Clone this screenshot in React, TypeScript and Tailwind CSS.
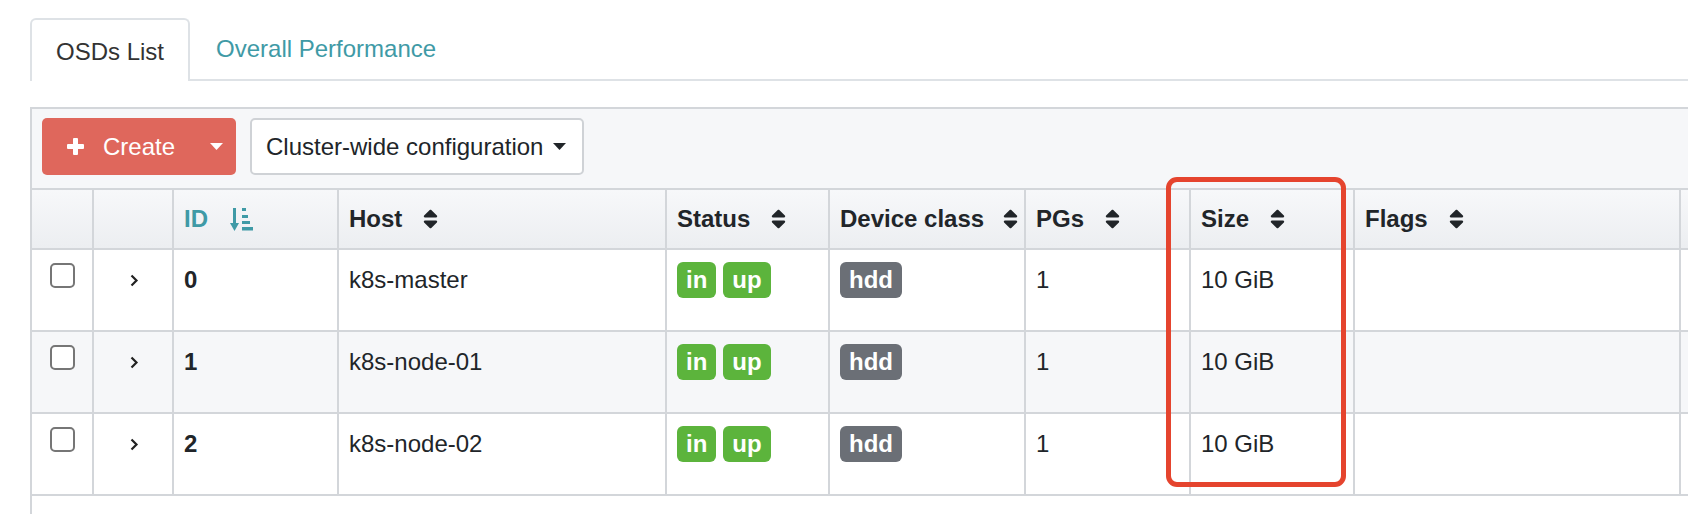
import React from 'react';

type Osd = { id: number; host: string; pgs: number; size: string };

const osds: Osd[] = [
  { id: 0, host: 'k8s-master', pgs: 1, size: '10 GiB' },
  { id: 1, host: 'k8s-node-01', pgs: 1, size: '10 GiB' },
  { id: 2, host: 'k8s-node-02', pgs: 1, size: '10 GiB' },
];

const SortIcon = () => (
  <svg width="15" height="24" viewBox="0 0 320 512" className="shrink-0 fill-[#212529]">
    <path d="M41 288h238c21.4 0 32.1 25.9 17 41L177 448c-9.4 9.4-24.6 9.4-33.9 0L24 329c-15.1-15.1-4.4-41 17-41zm255-105L177 64c-9.4-9.4-24.6-9.4-33.9 0L24 183c-15.1 15.1-4.4 41 17 41h238c21.4 0 32.1-25.9 17-41z" />
  </svg>
);

const SortAscIcon = () => (
  <svg width="24" height="25" viewBox="0 0 24 25" className="shrink-0 fill-[#3f9aa6]">
    <rect x="3" y="1" width="3" height="18" />
    <path d="M0 16h9l-4.5 8z" />
    <rect x="12" y="1" width="4" height="3" />
    <rect x="12" y="8" width="6" height="3" />
    <rect x="12" y="14" width="8" height="3" />
    <rect x="12" y="20" width="11" height="3.5" />
  </svg>
);

const Caret = ({ color }: { color: string }) => (
  <svg width="13" height="7" viewBox="0 0 13 7" className="shrink-0">
    <path d="M0 0h13L6.5 7z" fill={color} />
  </svg>
);

const cols = [
  'w-[60px]',
  'w-[80px]',
  'w-[165px]',
  'w-[328px]',
  'w-[163px]',
  'w-[196px]',
  'w-[165px]',
  'w-[164px]',
  'w-[326px]',
  'w-[220px]',
];

function HeadCell({ i, children }: { i: number; children?: React.ReactNode }) {
  return (
    <div className={`${cols[i]} shrink-0 h-full flex items-center pl-[10px] ${i > 0 ? 'border-l-2 border-[#d3d6da]' : ''}`}>
      {children}
    </div>
  );
}

function Cell({ i, children }: { i: number; children?: React.ReactNode }) {
  return (
    <div className={`${cols[i]} shrink-0 h-full pl-[10px] pt-[12px] leading-[36px] ${i > 0 ? 'border-l-2 border-[#d3d6da]' : ''}`}>
      {children}
    </div>
  );
}

const Badge = ({ label, color }: { label: string; color: string }) => (
  <span className={`inline-block h-[36px] leading-[36px] px-[9px] rounded-[6px] text-white font-bold ${color}`}>{label}</span>
);

export default function App() {
  return (
    <div className="relative w-[1688px] h-[514px] overflow-hidden bg-white pl-[30px] pt-[18px] font-['Liberation_Sans',Arial,sans-serif] text-[24px] text-[#212529]">
      <div className="flex items-end h-[63px] border-b-2 border-[#dee2e6] w-[1700px]">
        <div className="h-[63px] -mb-[2px] px-[24px] pt-[2px] flex items-center bg-white border-2 border-b-0 border-[#dee2e6] rounded-t-[6px] text-[#333]">
          OSDs List
        </div>
        <div className="h-[63px] px-[26px] pt-[2px] flex items-center text-[#3f9aa6]">Overall Performance</div>
      </div>

      <div className="mt-[26px] w-[1800px] h-[500px] border-l-2 border-t-2 border-[#d3d6da]">
        <div className="h-[79px] bg-[#f6f7f9] pl-[10px] pt-[9px] flex items-start gap-[14px]">
          <div className="w-[194px] h-[57px] rounded-[5px] bg-[#df675c] text-white flex items-center pl-[25px] pr-[13px]">
            <svg width="17" height="17" viewBox="0 0 17 17" className="shrink-0 fill-white">
              <rect x="6" y="0" width="5" height="17" rx="1" />
              <rect x="0" y="6" width="17" height="5" rx="1" />
            </svg>
            <span className="ml-[19px]">Create</span>
            <span className="ml-auto">
              <Caret color="#ffffff" />
            </span>
          </div>
          <div className="w-[334px] h-[57px] rounded-[5px] bg-white border-2 border-[#cfd2d6] flex items-center pl-[14px]">
            <span>Cluster-wide configuration</span>
            <span className="ml-[10px]">
              <Caret color="#212529" />
            </span>
          </div>
        </div>

        <div className="flex h-[62px] border-y-2 border-[#d3d6da] bg-linear-to-b from-[#f7f8fa] to-[#eceef1] font-bold">
          <HeadCell i={0} />
          <HeadCell i={1} />
          <HeadCell i={2}>
            <span className="text-[#3f9aa6]">ID</span>
            <span className="ml-[22px]">
              <SortAscIcon />
            </span>
          </HeadCell>
          {['Host', 'Status', 'Device class', 'PGs', 'Size', 'Flags'].map((h, k) => (
            <HeadCell key={h} i={k + 3}>
              <span>{h}</span>
              <span className={h === 'Device class' ? 'ml-[19px]' : 'ml-[21px]'}>
                <SortIcon />
              </span>
            </HeadCell>
          ))}
          <HeadCell i={9} />
        </div>

        {osds.map((o, r) => (
          <div key={o.id} className={`flex h-[82px] border-b-2 border-[#d3d6da] ${r === 1 ? 'bg-[#f6f7f9]' : 'bg-white'}`}>
            <div className={`${cols[0]} shrink-0 h-full pt-[13px] flex justify-center`}>
              <div className="w-[25px] h-[25px] rounded-[5px] border-2 border-[#767676] bg-white" />
            </div>
            <Cell i={1}>
              <div className="h-[36px] flex items-center justify-center pr-[10px]">
                <svg width="9" height="13" viewBox="0 0 9 13" fill="none" className="ml-[2px]">
                  <path d="M1.5 1.5l5 5-5 5" stroke="#222" strokeWidth="2.2" />
                </svg>
              </div>
            </Cell>
            <Cell i={2}>
              <span className="font-bold">{o.id}</span>
            </Cell>
            <Cell i={3}>{o.host}</Cell>
            <Cell i={4}>
              <div className="flex gap-[7px]">
                <Badge label="in" color="bg-[#5cb43c]" />
                <Badge label="up" color="bg-[#5cb43c]" />
              </div>
            </Cell>
            <Cell i={5}>
              <Badge label="hdd" color="bg-[#6b6f76]" />
            </Cell>
            <Cell i={6}>{o.pgs}</Cell>
            <Cell i={7}>{o.size}</Cell>
            <Cell i={8} />
            <Cell i={9} />
          </div>
        ))}
      </div>

      <div className="absolute left-[1166px] top-[177px] w-[180px] h-[310px] border-[5px] border-[#e5442e] rounded-[11px]" />
    </div>
  );
}
